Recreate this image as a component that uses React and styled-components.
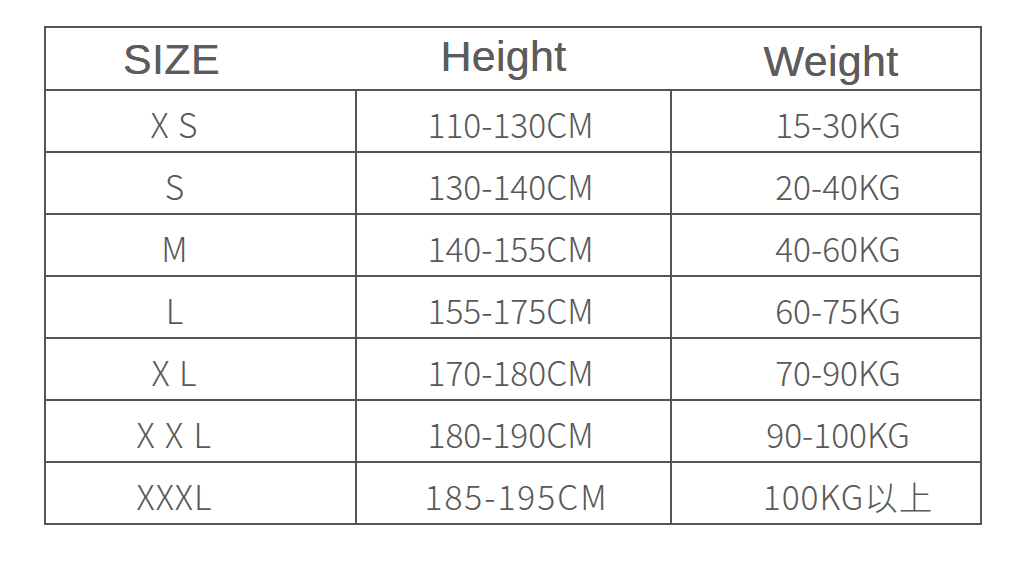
import React from "react";
import styled, { createGlobalStyle } from "styled-components";

const Global = createGlobalStyle`
  html, body { margin: 0; padding: 0; background: #fff; }
  body { width: 1024px; height: 563px; overflow: hidden; }
`;

const Page = styled.div`
  width: 1024px;
  height: 563px;
  background: #fff;
  padding: 26px 0 0 44px;
  box-sizing: border-box;
`;

const Table = styled.div`
  width: 938px;
  border: 2px solid #555;
  box-sizing: border-box;
  display: flex;
  flex-direction: column;
`;

const Row = styled.div`
  display: grid;
  grid-template-columns: 309px 315px 1fr;
  height: ${(p) => (p.$head ? 61 : 62)}px;
  border-top: ${(p) => (p.$head ? "none" : "2px solid #555")};
  box-sizing: border-box;
`;

const HeadCell = styled.div`
  display: flex;
  align-items: center;
  justify-content: center;
  font-family: "Liberation Sans", Arial, sans-serif;
  font-size: 43px;
  color: #5c5c5c;
  letter-spacing: 0.3px;
  text-shadow: 0 0 0.6px #5c5c5c;
  padding: ${(p) => p.$pad || "0"};
  box-sizing: border-box;
`;

const Cell = styled.div`
  display: flex;
  align-items: center;
  justify-content: center;
  font-family: "Noto Sans CJK SC", "Noto Sans", sans-serif;
  font-weight: 300;
  font-size: 33.5px;
  color: #585858;
  letter-spacing: ${(p) => p.$ls || 0}px;
  padding: ${(p) => p.$pad || "0"};
  border-left: ${(p) => (p.$divider ? "2px solid #555" : "none")};
  box-sizing: border-box;
  white-space: pre;
`;

const rows = [
  { size: "X S", sls: 1, h: "110-130CM", w: "15-30KG" },
  { size: "S", h: "130-140CM", w: "20-40KG" },
  { size: "M", h: "140-155CM", w: "40-60KG" },
  { size: "L", h: "155-175CM", w: "60-75KG" },
  { size: "X L", sls: 1, h: "170-180CM", w: "70-90KG" },
  { size: "X X L", sls: 1.5, h: "180-190CM", w: "90-100KG" },
  { size: "XXXL", sls: 1, h: "185-195CM", hls: 2, hpad: "5px 0 0 6px", w: "100KG以上", wls: 1, wpad: 44 },
];

export default function App() {
  return (
    <>
      <Global />
      <Page>
        <Table>
          <Row $head>
            <HeadCell $pad="2px 58px 0 0">SIZE</HeadCell>
            <HeadCell $pad="0 18px 4px 0">Height</HeadCell>
            <HeadCell $pad="6px 0 0 12px">Weight</HeadCell>
          </Row>
          {rows.map((r, i) => (
            <Row key={i}>
              <Cell $pad="5px 52px 0 0" $ls={r.sls}>{r.size}</Cell>
              <Cell $divider $pad={r.hpad || "5px 6px 0 0"} $ls={r.hls}>{r.h}</Cell>
              <Cell $divider $pad={`5px 0 0 ${r.wpad || 24}px`} $ls={r.wls}>{r.w}</Cell>
            </Row>
          ))}
        </Table>
      </Page>
    </>
  );
}
